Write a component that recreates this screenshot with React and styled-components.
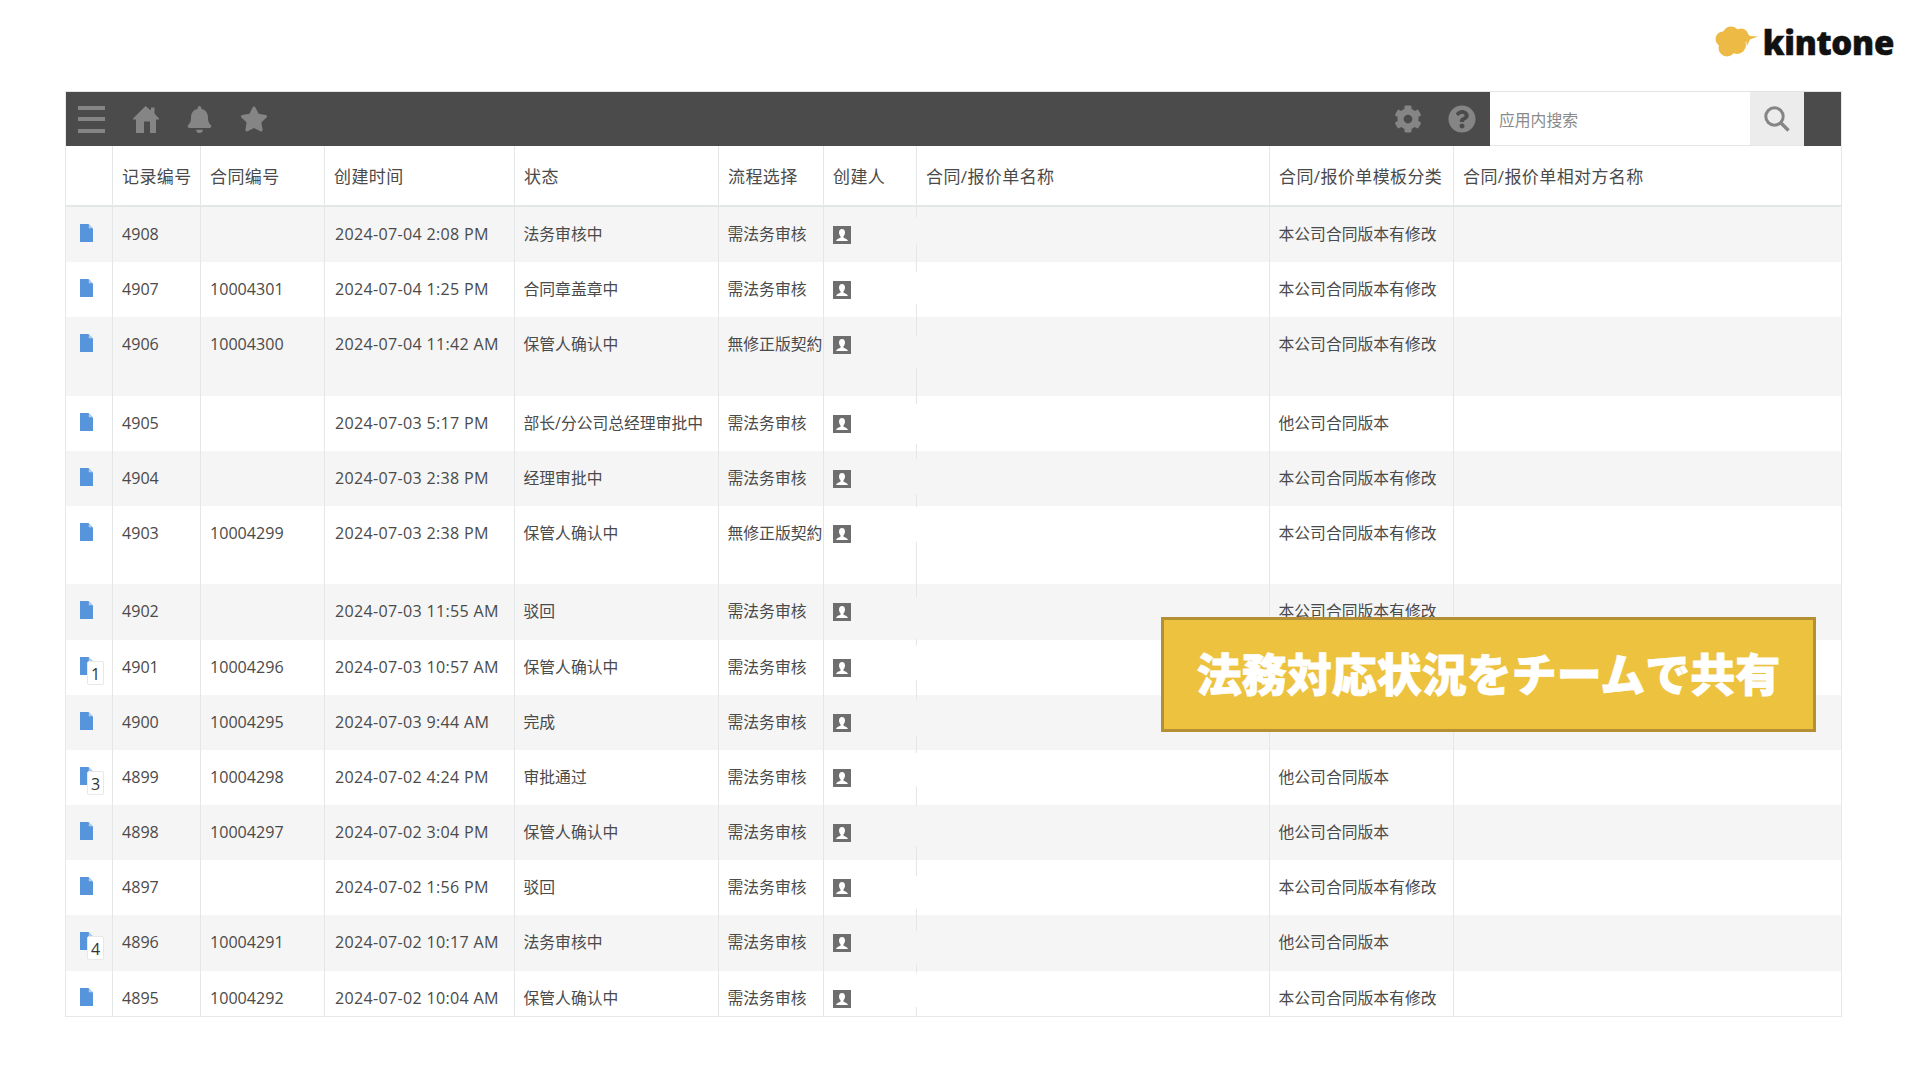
import React from "react";
import styled, { createGlobalStyle } from "styled-components";
import { FaBell, FaCog, FaQuestionCircle, FaStar } from "react-icons/fa";

const RECORDS = [
  { id: "4908", no: "", time: "2024-07-04 2:08 PM", status: "法务审核中", flow: "需法务审核", kind: "本公司合同版本有修改", mask: [10, 27] },
  { id: "4907", no: "10004301", time: "2024-07-04 1:25 PM", status: "合同章盖章中", flow: "需法务审核", kind: "本公司合同版本有修改", mask: [10, 32] },
  { id: "4906", no: "10004300", time: "2024-07-04 11:42 AM", status: "保管人确认中", flow: "無修正版契約", kind: "本公司合同版本有修改", mask: [19, 32], tall: true },
  { id: "4905", no: "", time: "2024-07-03 5:17 PM", status: "部长/分公司总经理审批中", flow: "需法务审核", kind: "他公司合同版本", mask: [8, 40] },
  { id: "4904", no: "", time: "2024-07-03 2:38 PM", status: "经理审批中", flow: "需法务审核", kind: "本公司合同版本有修改", mask: [8, 35] },
  { id: "4903", no: "10004299", time: "2024-07-03 2:38 PM", status: "保管人确认中", flow: "無修正版契約", kind: "本公司合同版本有修改", mask: [1, 35], tall: true },
  { id: "4902", no: "", time: "2024-07-03 11:55 AM", status: "驳回", flow: "需法务审核", kind: "本公司合同版本有修改", mask: [13, 42] },
  { id: "4901", no: "10004296", time: "2024-07-03 10:57 AM", status: "保管人确认中", flow: "需法务审核", kind: "本公司合同版本有修改", mask: [6, 34], comments: 1 },
  { id: "4900", no: "10004295", time: "2024-07-03 9:44 AM", status: "完成", flow: "需法务审核", kind: "本公司合同版本有修改", mask: [5, 36] },
  { id: "4899", no: "10004298", time: "2024-07-02 4:24 PM", status: "审批通过", flow: "需法务审核", kind: "他公司合同版本", mask: [3, 33], comments: 3 },
  { id: "4898", no: "10004297", time: "2024-07-02 3:04 PM", status: "保管人确认中", flow: "需法务审核", kind: "他公司合同版本", mask: [1, 40] },
  { id: "4897", no: "", time: "2024-07-02 1:56 PM", status: "驳回", flow: "需法务审核", kind: "本公司合同版本有修改", mask: [16, 33] },
  { id: "4896", no: "10004291", time: "2024-07-02 10:17 AM", status: "法务审核中", flow: "需法务审核", kind: "他公司合同版本", mask: [16, 33], comments: 4 },
  { id: "4895", no: "10004292", time: "2024-07-02 10:04 AM", status: "保管人确认中", flow: "需法务审核", kind: "本公司合同版本有修改", mask: [2, 34] },
];

const HEADERS = [
  "",
  "记录编号",
  "合同编号",
  "创建时间",
  "状态",
  "流程选择",
  "创建人",
  "合同/报价单名称",
  "合同/报价单模板分类",
  "合同/报价单相对方名称",
];

export default function App() {
  return (
    <Page>
      <GlobalStyle />
      <TopBar>
        <Logo>
          <CloudIcon />
          <LogoText>kintone</LogoText>
        </Logo>
      </TopBar>
      <Panel>
        <Toolbar>
          <MenuIcon>
            <span />
            <span />
            <span />
          </MenuIcon>
          <ToolIcon>
            <HomeIcon />
          </ToolIcon>
          <ToolIcon>
            <FaBell size={27} />
          </ToolIcon>
          <ToolIcon>
            <FaStar size={28} />
          </ToolIcon>
          <Spacer />
          <ToolIcon $gap={26}>
            <FaCog size={28} />
          </ToolIcon>
          <ToolIcon $gap={14}>
            <FaQuestionCircle size={28} />
          </ToolIcon>
          <SearchField>应用内搜索</SearchField>
          <SearchButton>
            <SearchIcon />
          </SearchButton>
        </Toolbar>

        <HeaderRow>
          {HEADERS.map((title, i) => (
            <HeaderCell key={i}>{title}</HeaderCell>
          ))}
        </HeaderRow>

        {RECORDS.map((record, i) => (
          <Row key={record.id} $alt={i % 2 === 0} $tall={record.tall}>
            <IconCell>
              <FileIcon />
              {record.comments && <CommentBadge>{record.comments}</CommentBadge>}
            </IconCell>
            <Cell $latin>{record.id}</Cell>
            <Cell $latin>{record.no}</Cell>
            <DateCell $latin>{record.time}</DateCell>
            <Cell>{record.status}</Cell>
            <Cell>{record.flow}</Cell>
            <UserCell>
              <UserIcon />
              <NameMask $alt={i % 2 === 0} $top={record.mask[0]} $height={record.mask[1]} />
            </UserCell>
            <Cell />
            <Cell>{record.kind}</Cell>
            <Cell />
          </Row>
        ))}
      </Panel>
      <Banner>法務対応状況をチームで共有</Banner>
    </Page>
  );
}

function CloudIcon() {
  return (
    <svg width="43" height="31" viewBox="0 0 43 31" fill="#ecba45">
      <circle cx="8" cy="13" r="7.5" />
      <circle cx="16" cy="9" r="8.5" />
      <circle cx="26" cy="10" r="7.5" />
      <circle cx="12" cy="22" r="8.5" />
      <circle cx="22" cy="19" r="9" />
      <path d="M29 4 L35 10 L43 10.5 L35 13.5 L32 20 Z" />
    </svg>
  );
}

function HomeIcon() {
  return (
    <svg width="26" height="27" viewBox="0 0 26 27" fill="currentColor">
      <path d="M12.5 0 L18 4.6 V1.5 H21.5 V7.6 L26 12.5 V13.5 H23 V27 H17 V15.5 H11 V27 H3 V13.5 H0 V12.5 Z" />
    </svg>
  );
}

function SearchIcon() {
  return (
    <svg width="26" height="26" viewBox="0 0 26 26" fill="none" stroke="#858585">
      <circle cx="10.5" cy="10.5" r="8.7" strokeWidth="3" />
      <path d="M17 17 L24.5 24.5" strokeWidth="3.4" />
    </svg>
  );
}

function FileIcon() {
  return (
    <svg width="13" height="18" viewBox="0 0 13 18">
      <path d="M0 0 H8.5 L13 4.5 V18 H0 Z" fill="#5694dc" />
      <path d="M8.8 0.4 L12.6 4.2 H8.8 Z" fill="#b5d0ef" />
    </svg>
  );
}

function UserIcon() {
  return (
    <svg width="18" height="18" viewBox="0 0 18 18">
      <rect width="18" height="18" fill="#6e6e6e" />
      <path
        d="M9 3 C11 3 12 4.6 12 6.6 C12 8.4 11.2 9.8 10.4 10.4 V11.4 C11.8 12.4 14.4 12.6 15 15 H3 C3.6 12.6 6.2 12.4 7.6 11.4 V10.4 C6.8 9.8 6 8.4 6 6.6 C6 4.6 7 3 9 3 Z"
        fill="#fff"
      />
    </svg>
  );
}

const GlobalStyle = createGlobalStyle`
  html, body {
    margin: 0;
    padding: 0;
    background: #ffffff;
  }
`;

const Page = styled.div`
  position: relative;
  width: 1916px;
  height: 1078px;
  overflow: hidden;
  background: #ffffff;
  color: #4a4a4a;
  font-family: "Open Sans", "Noto Sans CJK SC", sans-serif;
`;

const TopBar = styled.div`
  height: 91px;
  display: flex;
  justify-content: flex-end;
  padding: 26px 22px 0 0;
  box-sizing: border-box;
`;

const Logo = styled.div`
  display: flex;
  align-items: flex-start;
  gap: 5px;
  height: 34px;
`;

const LogoText = styled.span`
  font-family: "Open Sans", sans-serif;
  font-weight: 800;
  font-size: 33px;
  line-height: 33px;
  letter-spacing: -0.3px;
  color: #111111;
  -webkit-text-stroke: 0.5px #111111;
`;

const Panel = styled.div`
  width: 1775px;
  height: 925px;
  margin-left: 65px;
  overflow: hidden;
  border-left: 1px solid #e6e8e9;
  border-right: 1px solid #e6e8e9;
  border-bottom: 1px solid #e6e8e9;
  box-sizing: content-box;
`;

const Toolbar = styled.div`
  height: 54px;
  display: flex;
  align-items: center;
  padding-left: 12px;
  border-top: 1px solid #e3e3e3;
  background: #4b4b4b;
  color: #858585;
`;

const MenuIcon = styled.div`
  width: 27px;
  height: 27px;
  display: flex;
  flex-direction: column;
  justify-content: space-between;
  margin-right: 28px;

  span {
    height: 4px;
    background: #858585;
  }
`;

const ToolIcon = styled.div`
  display: flex;
  margin-right: ${props => props.$gap || 27}px;
`;

const Spacer = styled.div`
  flex: 1;
`;

const SearchField = styled.div`
  width: 260px;
  height: 54px;
  display: flex;
  align-items: center;
  padding: 1px 0 0 9px;
  background: #ffffff;
  border-bottom: 1px solid #e3e7e8;
  box-sizing: border-box;
  font-size: 15.8px;
  color: #8a8a8a;
`;

const SearchButton = styled.div`
  width: 54px;
  height: 54px;
  display: flex;
  align-items: center;
  justify-content: center;
  margin-right: 37px;
  background: #ececec;
  border-bottom: 1px solid #e3e7e8;
  box-sizing: border-box;
`;

const COLUMNS = "47px 88px 124px 190px 204px 105px 93px 353px 184px 387px";

const HeaderRow = styled.div`
  height: 59px;
  display: grid;
  grid-template-columns: ${COLUMNS};
  border-bottom: 2px solid #e3e7e8;
  box-sizing: content-box;
  background: #ffffff;
`;

const HeaderCell = styled.div`
  padding: 19px 0 0 9px;
  border-right: 1px solid #e3e7e8;
  font-size: 17px;
  line-height: 23px;
  letter-spacing: 0.4px;
  white-space: nowrap;
  overflow: hidden;
  box-sizing: border-box;

  &:last-child {
    border-right: none;
  }
`;

const Row = styled.div`
  height: ${props => (props.$tall ? "78.3px" : "55.2px")};
  display: grid;
  grid-template-columns: ${COLUMNS};
  background: ${props => (props.$alt ? "#f5f5f5" : "#ffffff")};
`;

const Cell = styled.div`
  padding: 16px 0 0 ${props => (props.$latin ? "9px" : "8.5px")};
  border-right: 1px solid #e3e7e8;
  font-size: ${props => (props.$latin ? "16.1px" : "15.8px")};
  line-height: 22px;
  white-space: nowrap;
  box-sizing: border-box;

  &:last-child {
    border-right: none;
  }
`;

const DateCell = styled(Cell)`
  padding-left: 10px;
  letter-spacing: 0.3px;
`;

const IconCell = styled(Cell)`
  position: relative;
  padding: 17px 0 0 14px;
`;

const CommentBadge = styled.div`
  position: absolute;
  left: 21px;
  top: 21px;
  width: 17px;
  height: 24px;
  background: #ffffff;
  border: 1px solid #e8e8e8;
  border-radius: 2px;
  box-sizing: border-box;
  font-size: 16px;
  line-height: 25px;
  text-align: center;
  color: #333333;
`;

const UserCell = styled(Cell)`
  position: relative;
  padding: 19px 0 0 9px;
`;

const NameMask = styled.div`
  position: absolute;
  right: -1px;
  top: ${props => props.$top}px;
  width: 60px;
  height: ${props => props.$height}px;
  background: ${props => (props.$alt ? "#f5f5f5" : "#ffffff")};
`;

const Banner = styled.div`
  position: absolute;
  left: 1161px;
  top: 617px;
  width: 655px;
  height: 115px;
  display: flex;
  align-items: center;
  justify-content: center;
  padding-bottom: 4px;
  background: #edc23f;
  border: 3px solid #b58f33;
  box-sizing: border-box;
  font-family: "Noto Sans CJK JP", sans-serif;
  font-weight: 900;
  font-size: 45px;
  line-height: 1;
  color: #ffffff;
  -webkit-text-stroke: 0.8px #ffffff;
`;
